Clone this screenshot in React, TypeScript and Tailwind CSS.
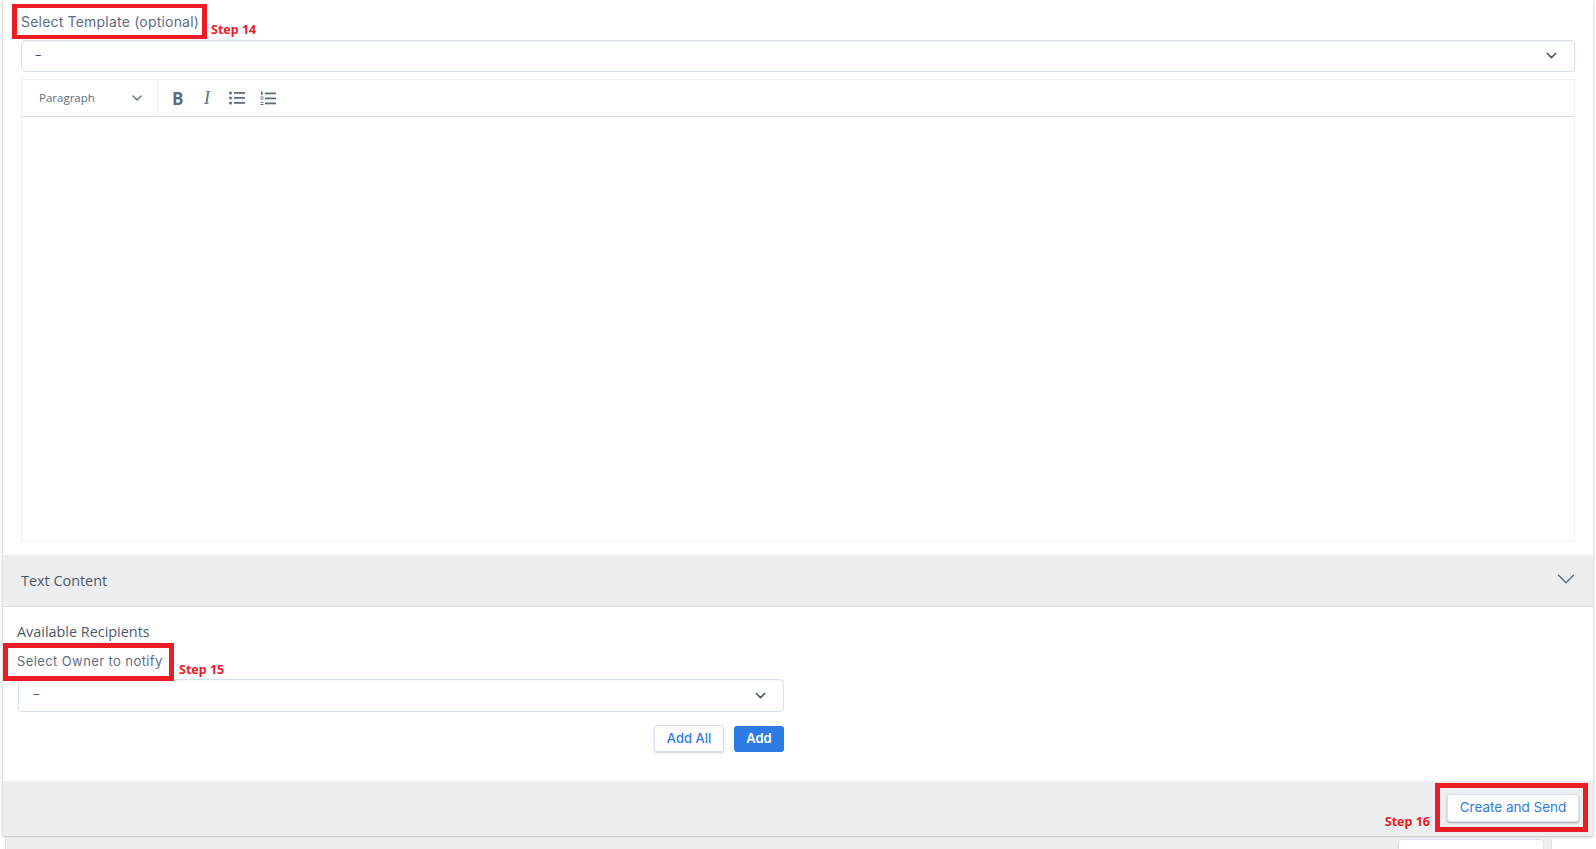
import { ChevronDown } from 'lucide-react';

const SelectBox = ({ className }: { className: string }) => (
  <div className={`flex items-center justify-between rounded border border-[#d8e2ef] bg-white shadow-[inset_0_1px_2px_rgba(0,0,0,0.04)] ${className}`}>
    <span className="font-['Open_Sans',sans-serif] text-[13px] text-[#4d5969]">–</span>
    <ChevronDown className="h-[17px] w-[17px] text-[#4d5969]" strokeWidth={2} />
  </div>
);

const BulletList = () => (
  <svg width="16" height="14" viewBox="0 0 16 14" className="text-[#5e6e82]" fill="currentColor">
    <circle cx="1.5" cy="2" r="1.5" />
    <circle cx="1.5" cy="7" r="1.5" />
    <circle cx="1.5" cy="12" r="1.5" />
    <rect x="5" y="1" width="11" height="1.8" />
    <rect x="5" y="6" width="11" height="1.8" />
    <rect x="5" y="11" width="11" height="1.8" />
  </svg>
);

const NumberList = () => (
  <svg width="16" height="15" viewBox="0 0 16 15" className="text-[#5e6e82]" fill="currentColor">
    <rect x="1" y="0.5" width="1.6" height="3.5" />
    <rect x="0.5" y="5.5" width="3" height="1" />
    <rect x="0.5" y="7.5" width="3" height="1" />
    <rect x="0.5" y="11" width="3" height="1" />
    <rect x="0.5" y="13" width="3" height="1" />
    <rect x="5" y="1.5" width="11" height="1.8" />
    <rect x="5" y="6.5" width="11" height="1.8" />
    <rect x="5" y="11.5" width="11" height="1.8" />
  </svg>
);

const StepLabel = ({ text }: { text: string }) => (
  <span className="font-['Noto_Sans',sans-serif] text-[12.5px] font-bold leading-none text-[#ed1c24]">{text}</span>
);

export default function App() {
  return (
    <div className="relative h-[849px] w-[1596px] overflow-hidden bg-white font-['Inter',sans-serif]">
      <div className="ml-[3px] w-[1590px] bg-white shadow-[0_1px_3px_rgba(0,0,0,0.3)]">
        <div className="flex h-[40px] items-end pl-[9px]">
          <div className="mb-[1px] flex h-[35px] w-[195px] items-center border-[4px] border-x-[5px] border-[#ed1c24] pl-[4px] text-[14px] tracking-[0.2px] text-[#5e6e82]">
            Select Template (optional)
          </div>
          <div className="ml-[4px]">
            <StepLabel text="Step 14" />
          </div>
        </div>

        <div className="px-[18px]">
          <SelectBox className="h-[32px] pb-[2px] pl-[13px] pr-[14px]" />

          <div className="mt-[7px] border border-[#edf2f9]">
            <div className="flex h-[37px] items-center border-b border-[#d8e2ef]">
              <div className="flex h-full w-[136px] items-center justify-between border-r border-[#edf2f9] pl-[17px] pr-[12px]">
                <span className="font-['Open_Sans',sans-serif] text-[11.5px] text-[#5e6e82]">Paragraph</span>
                <ChevronDown className="h-[16px] w-[16px] text-[#5e6e82]" strokeWidth={2} />
              </div>
              <div className="flex items-center">
                <span className="ml-[14px] w-[12px] font-['Open_Sans',sans-serif] text-[17px] font-bold leading-none text-[#5e6e82]">B</span>
                <span className="ml-[20px] w-[8px] font-['Liberation_Serif',serif] text-[18px] italic leading-none text-[#5e6e82]">I</span>
                <span className="ml-[17px]"><BulletList /></span>
                <span className="ml-[15px]"><NumberList /></span>
              </div>
            </div>
            <div className="h-[423px]" />
          </div>
        </div>

        <div className="mt-[14px] flex h-[52px] items-center justify-between border-b border-[#d8e2ef] bg-[#edeef0] pl-[18px] pr-[12px]">
          <span className="font-['Open_Sans',sans-serif] text-[14.4px] text-[#4d5969]">Text Content</span>
          <ChevronDown className="-mt-[3px] h-[30px] w-[30px] text-[#5e6e82]" strokeWidth={1.2} />
        </div>

        <div className="h-[174px] pl-[3px]">
          <div className="pl-[11px] pt-[15px] font-['Open_Sans',sans-serif] text-[14.4px] leading-[20px] text-[#4d5969]">
            Available Recipients
          </div>
          <div className="flex h-[39px] items-end">
            <div className="-ml-[3px] flex h-[38px] w-[171px] items-center border-[5px] border-[#ed1c24] pl-[9px] text-[13px] tracking-[0.4px] text-[#5e6e82]">
              Select Owner to notify
            </div>
            <div className="mb-[1px] ml-[5px]">
              <StepLabel text="Step 15" />
            </div>
          </div>
          <div className="-mt-[2px] ml-[12px] w-[766px]">
            <SelectBox className="h-[33px] pl-[14px] pr-[14px] [&>span]:mb-[4px]" />
            <div className="mt-[13px] flex justify-end gap-[10px]">
              <button className="h-[27px] w-[70px] rounded-[3px] border border-[#d8e2ef] bg-white text-[13px] font-medium text-[#2c7be5] shadow-[0_1px_2px_rgba(0,0,0,0.18)]">
                Add All
              </button>
              <button className="h-[26px] w-[50px] self-end rounded-[3px] bg-[#2c7be5] text-[13px] font-semibold text-white">
                Add
              </button>
            </div>
          </div>
        </div>

        <div className="flex h-[55px] items-end justify-end bg-[#edeef0] pb-[4px] pr-[5px]">
          <div className="mr-[5px]">
            <StepLabel text="Step 16" />
          </div>
          <div className="flex h-[49px] w-[153px] items-center justify-end border-[5px] border-[#ed1c24] pr-[4px]">
            <button className="h-[28px] w-[132px] rounded-[3px] border border-[#d8e2ef] bg-white text-[13.5px] text-[#2c7be5] shadow-[0_1px_2px_rgba(0,0,0,0.3)]">
              Create and Send
            </button>
          </div>
        </div>
      </div>

      <div className="ml-[5px] mt-[3px] flex h-[12px] w-[1547px] justify-end border-l border-r border-[#dfe1e4] bg-[#edeef0] pr-[7px]">
        <div className="h-full w-[146px] rounded-t-sm border border-[#d8e2ef] bg-white" />
      </div>
    </div>
  );
}
